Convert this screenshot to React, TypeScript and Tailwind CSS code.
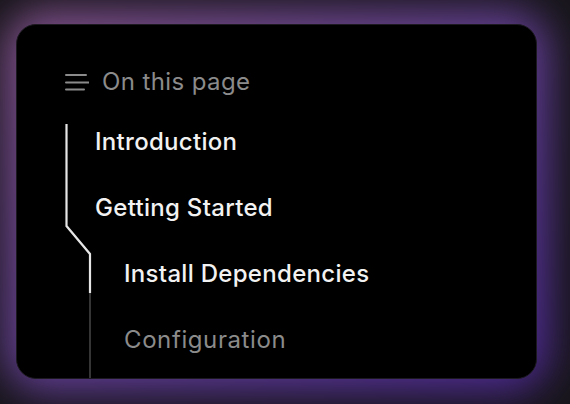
export default function App() {
  return (
    <div className="relative h-[404px] w-[570px] overflow-hidden bg-[#17151a] font-['Inter',sans-serif]">
      <div className="absolute left-[4px] top-[10px] h-[382px] w-[545px] rounded-[40px] bg-gradient-to-br from-[#8a5690] via-[#67419a] to-[#4e2898] opacity-95 blur-[20px]" />
      <div className="relative ml-[16px] mt-[24px] h-[355px] w-[521px] overflow-hidden rounded-[20px] border border-[#1c1a20] bg-black pl-[48px]">
        <div className="flex h-[84px] items-end pb-[15px]">
          <div className="flex items-center gap-[13px] text-[#8b8b8b]">
            <svg width="24" height="24" viewBox="0 0 24 24" fill="none" stroke="currentColor" strokeWidth="2" strokeLinecap="round">
              <path d="M1 5h20" />
              <path d="M1 12.5h23" />
              <path d="M1 19.5h18" />
            </svg>
            <span className="text-[24px] leading-none tracking-[0.4px]">On this page</span>
          </div>
        </div>
        <div className="relative">
          <svg className="absolute left-0 top-0" width="40" height="280" fill="none">
            <path d="M25 180V280" stroke="#353535" strokeWidth="2" />
            <path d="M1.5 15V117L25 145V184" stroke="#e6e6e6" strokeWidth="2.2" />
          </svg>
          <ul className="flex flex-col text-[24px] leading-none tracking-[0.3px]">
            <li className="flex h-[66px] items-center pl-[30px] font-medium text-[#f2f2f2]">Introduction</li>
            <li className="flex h-[66px] items-center pl-[30px] font-medium text-[#f2f2f2]">Getting Started</li>
            <li className="flex h-[66px] items-center pl-[59px] font-medium text-[#f2f2f2]">Install Dependencies</li>
            <li className="flex h-[66px] items-center pl-[59px] tracking-[0.6px] text-[#8b8b8b]">Configuration</li>
          </ul>
        </div>
      </div>
    </div>
  );
}
